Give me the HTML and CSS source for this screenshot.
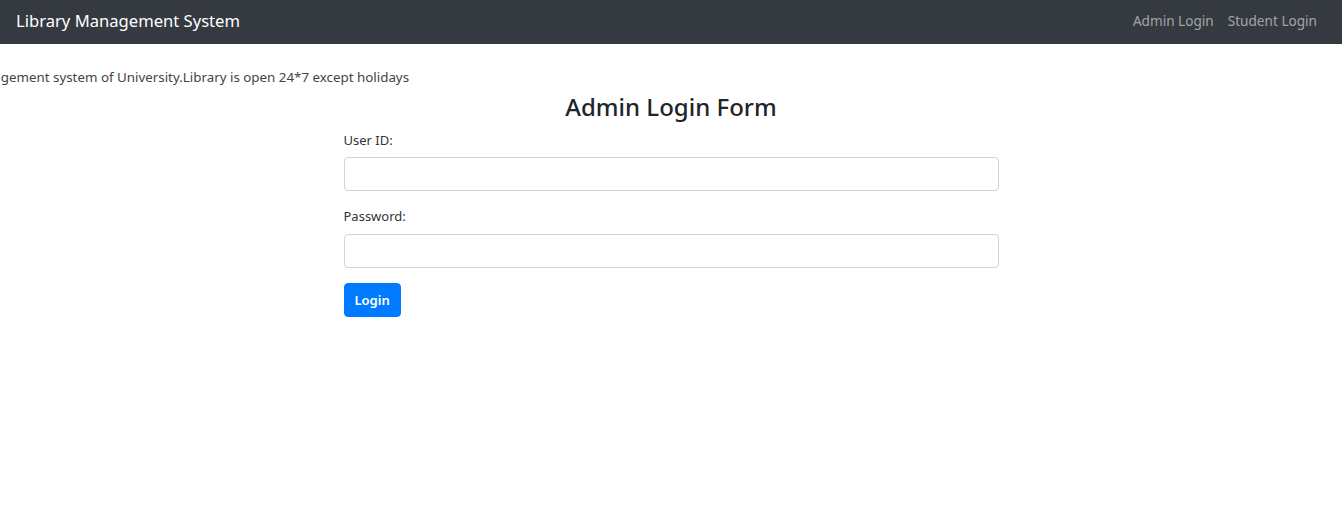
FILE: index.html
```
<!DOCTYPE html>
<html lang="en">
<head>
<meta charset="utf-8">
<title>Library Management System</title>
<link rel="stylesheet" href="styles.css">
</head>
<body>
<nav class="navbar">
  <a class="brand" href="#">Library Management System</a>
  <ul class="nav">
    <li><a class="nav-link" href="#">Admin Login</a></li>
    <li><a class="nav-link" href="#">Student Login</a></li>
  </ul>
</nav>
<div class="marquee"><span class="marquee-text">This is Library Management system of University.Library is open 24*7 except holidays</span></div>
<main class="container">
  <h3 class="title">Admin Login Form</h3>
  <form class="form">
    <div class="group">
      <label for="uid">User ID:</label>
      <input id="uid" class="control" type="text">
    </div>
    <div class="group">
      <label for="pwd">Password:</label>
      <input id="pwd" class="control" type="password">
    </div>
    <button type="button" class="btn">Login</button>
  </form>
</main>
</body>
</html>
```
FILE: styles.css
```
* { box-sizing: border-box; }
html, body { margin: 0; padding: 0; }
body {
  font-family: "Noto Sans", "Open Sans", sans-serif;
  color: #212529;
  background: #fff;
  font-size: 14px;
}
.navbar {
  height: 44px;
  background: #343a40;
  display: flex;
  align-items: center;
  justify-content: space-between;
  padding: 0 16px 3px;
}
.brand {
  color: #fff;
  text-decoration: none;
  font-size: 16.6px;
}
.nav {
  list-style: none;
  margin: 0;
  padding: 0;
  display: flex;
}
.nav-link {
  display: block;
  padding: 0 7px;
  color: rgba(255,255,255,.55);
  text-decoration: none;
  font-size: 13.6px;
}
.nav li:last-child .nav-link { padding-right: 9px; }
.marquee {
  margin-top: 24px;
  overflow: hidden;
  white-space: nowrap;
  height: 18px;
  font-size: 13.35px;
  color: #444;
}
.marquee-text {
  display: inline-block;
  margin-left: -124px;
}
.container {
  width: 655px;
  margin: 0 auto;
}
.title {
  margin: 5px 0 8px;
  text-align: center;
  font-weight: 500;
  font-size: 24px;
  line-height: 32px;
}
.group { margin-bottom: 16px; }
.group + .group label { margin-bottom: 9px; }
label {
  display: block;
  font-size: 13px;
  color: #333;
  margin-bottom: 8px;
  line-height: 18px;
}
.control {
  display: block;
  width: 100%;
  height: 34px;
  border: 1px solid #ced4da;
  border-radius: 4px;
  padding: 4px 10px;
  font: inherit;
}
.form .btn { margin-top: -1px; }
.btn {
  height: 34px;
  padding: 0 10px;
  background: #007bff;
  color: #fff;
  border: 1px solid #007bff;
  border-radius: 4px;
  font-family: inherit;
  font-size: 13px;
  font-weight: 600;
}
```
